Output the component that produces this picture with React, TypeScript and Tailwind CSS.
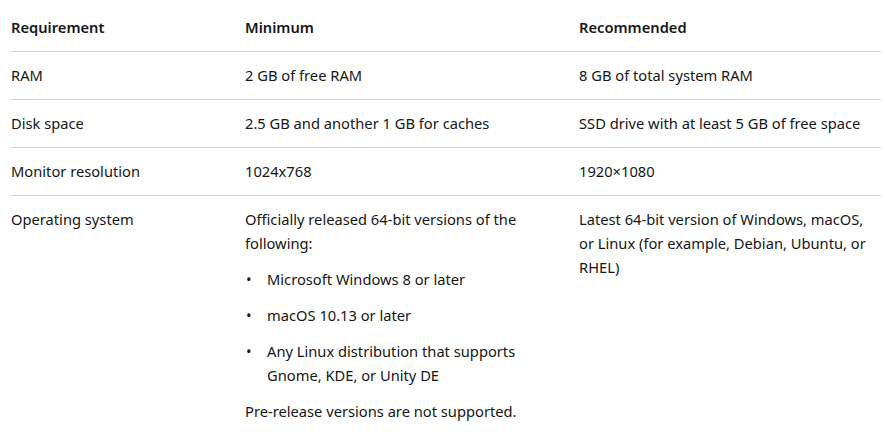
import React from "react";

const cell = "pt-[11px] pb-3 pr-3";

function Bullet({ children }: { children: React.ReactNode }) {
  return (
    <div className="flex">
      <span className="w-[22px] shrink-0 pl-[1px]">•</span>
      <span>{children}</span>
    </div>
  );
}

export default function App() {
  const rows: [string, React.ReactNode, React.ReactNode][] = [
    ["RAM", "2 GB of free RAM", "8 GB of total system RAM"],
    ["Disk space", "2.5 GB and another 1 GB for caches", "SSD drive with at least 5 GB of free space"],
    ["Monitor resolution", "1024x768", "1920×1080"],
  ];
  return (
    <div
      className="w-[887px] h-[434px] bg-white text-[#161616] text-[14.7px] leading-6 overflow-hidden pl-[11px]"
      style={{ fontFamily: '"Noto Sans", "Open Sans", sans-serif' }}
    >
      <div className="w-[870px]">
        <div className="grid grid-cols-[234px_334px_302px] border-b border-[#d2d2d2] font-semibold">
          <div className="pt-[15px] pb-3 pr-3">Requirement</div>
          <div className="pt-[15px] pb-3 pr-3">Minimum</div>
          <div className="pt-[15px] pb-3">Recommended</div>
        </div>
        {rows.map(([a, b, c]) => (
          <div key={a} className="grid grid-cols-[234px_334px_302px] border-b border-[#d2d2d2]">
            <div className={cell}>{a}</div>
            <div className={cell}>{b}</div>
            <div className="pt-[11px] pb-3">{c}</div>
          </div>
        ))}
        <div className="grid grid-cols-[234px_334px_302px]">
          <div className={cell}>Operating system</div>
          <div className={cell + " flex flex-col gap-3"}>
            <div>Officially released 64-bit versions of the following:</div>
            <Bullet>Microsoft Windows 8 or later</Bullet>
            <Bullet>macOS 10.13 or later</Bullet>
            <Bullet>Any Linux distribution that supports Gnome, KDE, or Unity DE</Bullet>
            <div>Pre-release versions are not supported.</div>
          </div>
          <div className="pt-[11px] pb-3">
            Latest 64-bit version of Windows, macOS, or Linux (for example, Debian, Ubuntu, or RHEL)
          </div>
        </div>
      </div>
    </div>
  );
}
